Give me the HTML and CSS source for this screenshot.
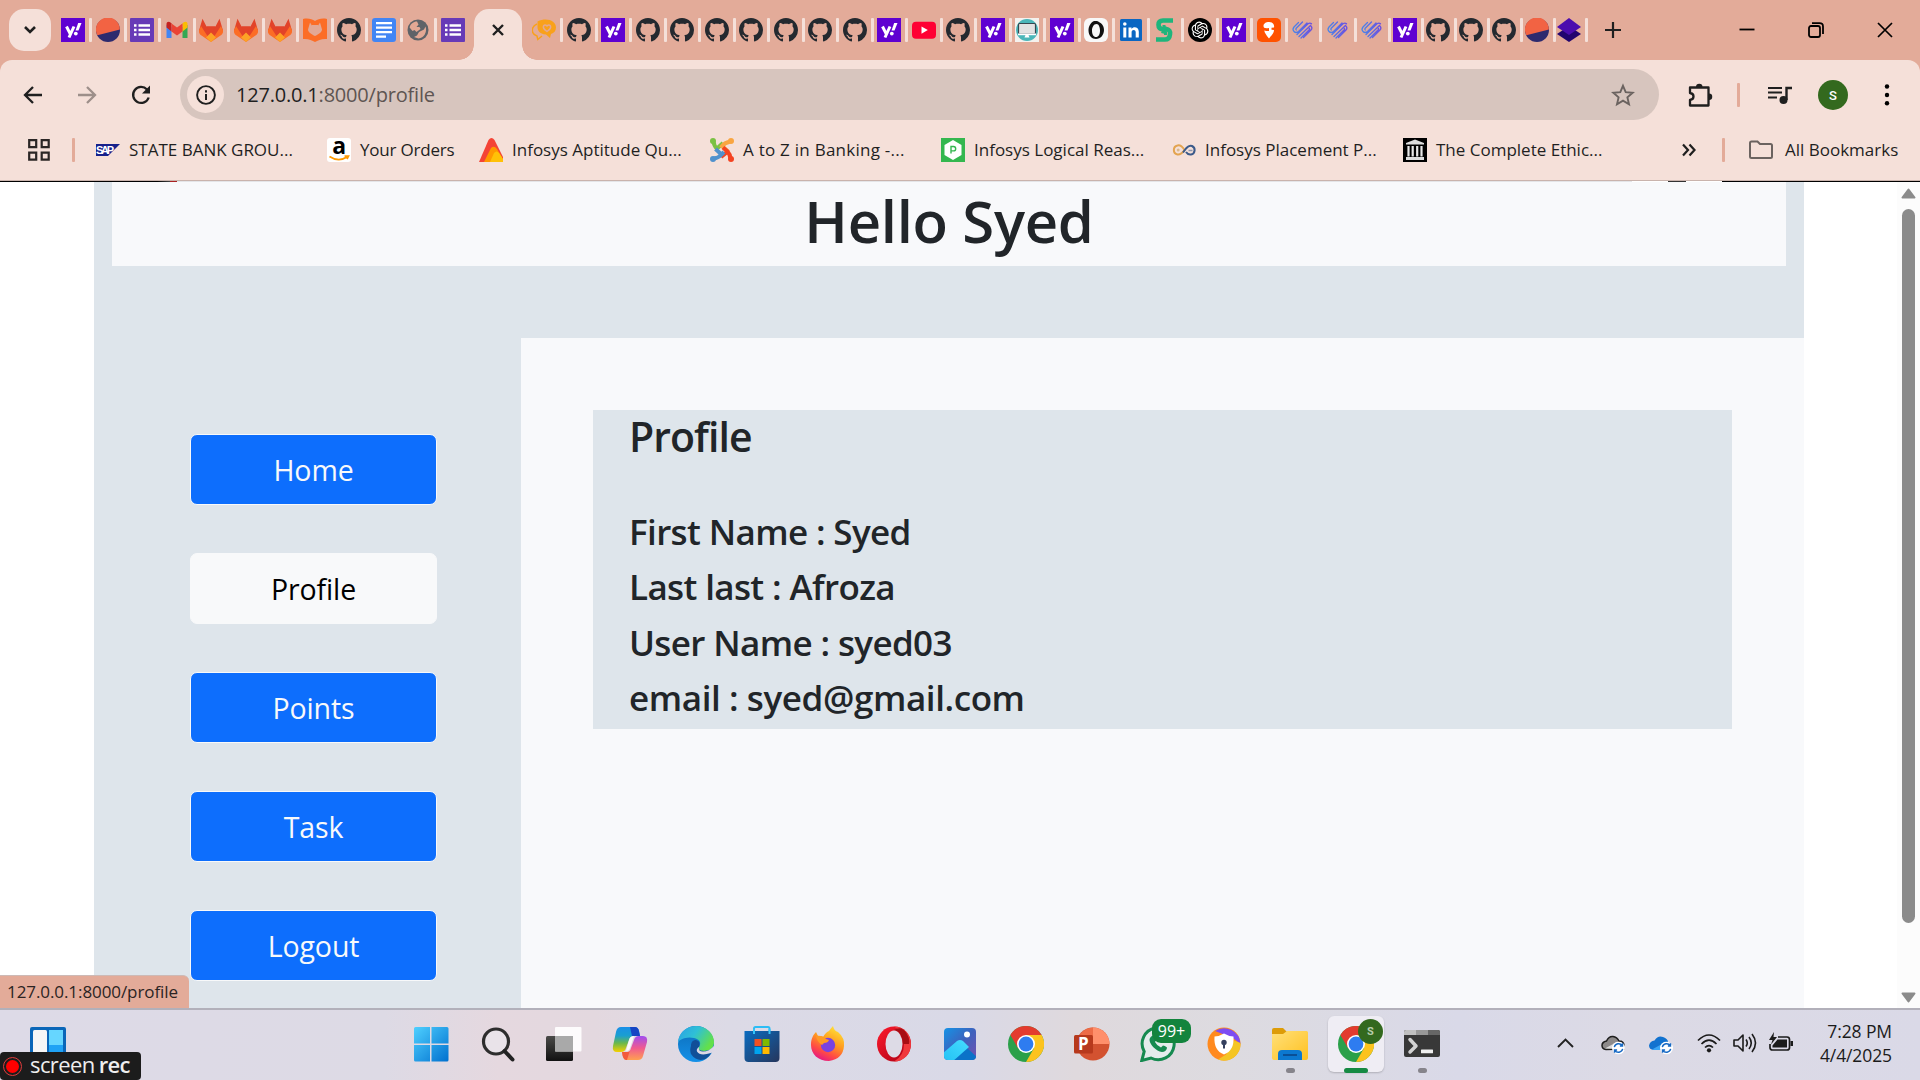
FILE: index.html
```html
<!DOCTYPE html>
<html lang="en">
<head>
<meta charset="utf-8">
<title>Profile</title>
<link rel="stylesheet" href="styles.css">
</head>
<body>
<svg class="sprite" width="0" height="0" aria-hidden="true">
  <defs>
    <linearGradient id="gWin" x1="0" y1="0" x2="1" y2="1"><stop offset="0" stop-color="#4fd0ff"/><stop offset="1" stop-color="#0070cf"/></linearGradient>
    <linearGradient id="gCopA" x1="0" y1="0" x2="0" y2="1"><stop offset="0" stop-color="#1a8fe8"/><stop offset=".35" stop-color="#1a9fd0"/><stop offset=".65" stop-color="#6cb84a"/><stop offset="1" stop-color="#f5d000"/></linearGradient>
    <linearGradient id="gCopB" x1="0" y1="0" x2="0" y2="1"><stop offset="0" stop-color="#a04df0"/><stop offset=".5" stop-color="#f05a90"/><stop offset="1" stop-color="#ffa050"/></linearGradient>
    <linearGradient id="gEdgeA" x1="0" y1="0" x2="1" y2=".5"><stop offset="0" stop-color="#2a9fe6"/><stop offset=".5" stop-color="#2fc0d6"/><stop offset="1" stop-color="#63e04a"/></linearGradient>
    <linearGradient id="gEdgeB" x1="0" y1="0" x2="0" y2="1"><stop offset="0" stop-color="#0c6cb8"/><stop offset="1" stop-color="#1490e8"/></linearGradient>
    <linearGradient id="gStore" x1="0" y1="0" x2="1" y2="1"><stop offset="0" stop-color="#0a6cc0"/><stop offset="1" stop-color="#26365c"/></linearGradient>
    <linearGradient id="gFox" x1=".8" y1="0" x2=".3" y2="1"><stop offset="0" stop-color="#ffe83a"/><stop offset=".45" stop-color="#ff9a1f"/><stop offset=".75" stop-color="#ff4a45"/><stop offset="1" stop-color="#e31587"/></linearGradient>
    <linearGradient id="gPhoto" x1="0" y1="0" x2="1" y2="1"><stop offset="0" stop-color="#1593e6"/><stop offset=".5" stop-color="#3d62bd"/><stop offset="1" stop-color="#7450b0"/></linearGradient>
    <linearGradient id="gPeak" x1="0" y1="1" x2="1" y2="0"><stop offset="0" stop-color="#22c0f4"/><stop offset="1" stop-color="#45dcff"/></linearGradient>
    <linearGradient id="gFold" x1="0" y1="0" x2="1" y2="1"><stop offset="0" stop-color="#ffe07a"/><stop offset="1" stop-color="#ffc120"/></linearGradient>
    <linearGradient id="gTask" x1="0" y1="0" x2="0" y2="1"><stop offset="0" stop-color="#4a4a48"/><stop offset="1" stop-color="#111"/></linearGradient>
    <linearGradient id="gOpera" x1="0" y1="0" x2="1" y2="1"><stop offset="0" stop-color="#ff1b2d"/><stop offset="1" stop-color="#a70014"/></linearGradient>
    <linearGradient id="gHatch" x1="0" y1="0" x2="1" y2="0"><stop offset="0" stop-color="#4a86e8"/><stop offset="1" stop-color="#6b4fe0"/></linearGradient>
  </defs>
  <symbol id="github" viewBox="0 0 16 16"><path fill="#24292f" d="M8 0C3.58 0 0 3.58 0 8c0 3.54 2.29 6.53 5.47 7.59.4.07.55-.17.55-.38 0-.19-.01-.82-.01-1.49-2.01.37-2.53-.49-2.69-.94-.09-.23-.48-.94-.82-1.13-.28-.15-.68-.52-.01-.53.63-.01 1.08.58 1.23.82.72 1.21 1.87.87 2.33.66.07-.52.28-.87.51-1.07-1.78-.2-3.64-.89-3.64-3.95 0-.87.31-1.59.82-2.15-.08-.2-.36-1.02.08-2.12 0 0 .67-.21 2.2.82.64-.18 1.32-.27 2-.27s1.36.09 2 .27c1.53-1.04 2.2-.82 2.2-.82.44 1.1.16 1.92.08 2.12.51.56.82 1.27.82 2.15 0 3.07-1.87 3.75-3.65 3.95.29.25.54.73.54 1.48 0 1.07-.01 1.93-.01 2.2 0 .21.15.46.55.38A8.01 8.01 0 0 0 16 8c0-4.42-3.58-8-8-8z"/></symbol>
  <symbol id="yahoo" viewBox="0 0 24 24"><path fill="#5f01d1" d="M0 0h24v24H0z"/><path d="M5.500 8.500l3.600 7.200M13 8.500l-5 11" stroke="#fff" stroke-width="3"/><path d="M17.200 5h3.300l-3 7.500h-3z" fill="#fff"/><circle cx="14.800" cy="15.600" r="1.900" fill="#fff"/></symbol>
  <symbol id="headspace" viewBox="0 0 24 24"><circle cx="12" cy="12" r="12" fill="#2d2a6e"/><path d="M1.400 17.300A12 12 0 1 1 23.900 11.500z" fill="#f26343"/></symbol>
  <symbol id="forms" viewBox="0 0 24 24"><rect width="24" height="24" rx="1" fill="#673ab7"/><path d="M8.500 7.500H20M8.500 12H20M8.500 16.500H20" stroke="#fff" stroke-width="2.400"/><path d="M4 7.500h2.500M4 12h2.500M4 16.500h2.500" stroke="#fff" stroke-width="2.400"/></symbol>
  <symbol id="gmail" viewBox="0 0 24 24"><path d="M1.500 7v13H6.500V9z" fill="#4285f4"/><path d="M17.500 9v11h5V7z" fill="#34a853"/><path d="M1.500 9V6c0-2.300 2.400-3 4-1.500L6.500 5.500v8L1.500 9.500z" fill="#c5221f"/><path d="M17.500 5.500l1-1c1.600-1.500 4-.8 4 1.500v3.500l-5 4z" fill="#fbbc04"/><path d="M6.500 5.500l5.500 4 5.500-4v8l-5.500 4-5.500-4z" fill="#ea4335"/></symbol>
  <symbol id="gitlab" viewBox="0 0 24 24"><path d="M0 12.500L3.500.8l4 7.700h9l4-7.700L24 12.500 12 22z" fill="#e24329"/><path d="M0 12.500l2-4.500 10 15.500L22 8l2 4.500c.5 2-1 4-2.500 5L12 24l-9.500-6.500C1 16.500-.5 14.500 0 12.500z" fill="#fc6d26"/><path d="M7.500 8.500h9L12 18z" fill="#e24329"/><path d="M12 14.500l5 5-5 4.500-5-4.500z" fill="#fca326"/></symbol>
  <symbol id="book" viewBox="0 0 24 24"><path d="M0 1c5-1 9 0 12 2 3-2 7-3 12-2v20c-5-.5-9 1-12 3-3-2-7-3.500-12-3z" fill="#fc6d26"/><path d="M7 4.500l2.500 4h5l2.500-4 2 7c0 3-4 5-7 6.500C9 16.500 5 14.500 5 11.500z" fill="#e3a894"/><path d="M9 8.500h6" stroke="#e3a894" stroke-width="3"/></symbol>
  <symbol id="docs" viewBox="0 0 24 24"><rect width="24" height="24" rx="3" fill="#4285f4"/><path d="M4 5.200h16M4 9.700h16M4 14.200h16M4 18.700h10" stroke="#fff" stroke-width="2.200"/></symbol>
  <symbol id="globe" viewBox="0 0 24 24"><circle cx="12" cy="12" r="10.500" fill="#5f6368"/><path d="M3.600 9.500C4.300 6 7.500 3.500 11 3.500l1.500 3-2 2.500h3l1 2-4 3-2-2-2 1zM13 14l5-2.500 1.500-3C21.500 14 18 20 12.500 20.500L8 19l3-1.500z" fill="#e3a894"/></symbol>
  <symbol id="chat" viewBox="0 0 24 24"><path d="M5.500 3.500C15-1 24 3 24 9.500c0 3.500-2 5.500-5 6.500l-1 4-4-3.500C7 16 5.500 12 5.500 9z" fill="#f9a11b"/><path d="M5 6C-1.500 9-1 16 5 18l.8 3.500L10 18" fill="none" stroke="#f9a11b" stroke-width="1.500"/><path d="M15 13.500q-4.500-3-3.500-5.500 1.500-2 3.500 0 2-2 3.500 0 1 2.500-3.500 5.500z" fill="none" stroke="#e3a894" stroke-width="1.500"/></symbol>
  <symbol id="youtube" viewBox="0 0 24 24"><rect y="3.700" width="24" height="17" rx="4" fill="#ff0033"/><path d="M9.500 8.500v7.200l6.300-3.600z" fill="#fff"/></symbol>
  <symbol id="monitor" viewBox="0 0 24 24"><path fill="#f4f1ee" d="M0 0h24v24H0z"/><circle cx="12" cy="12" r="11" fill="#4ab6b9"/><rect x="3.500" y="5.500" width="17" height="10.500" rx="1" fill="#e2e2e2" stroke="#37474f" stroke-width="1.200"/><path d="M3 15.500h18v1.700H3z" fill="#fff"/><path d="M10.500 17h3l1 2.500h-5z" fill="#fff"/></symbol>
  <symbol id="drop" viewBox="0 0 24 24"><rect width="24" height="24" rx="6" fill="#f8f8f8"/><path fill-rule="evenodd" d="M10 3C6 5 4.500 9 4.500 12.500 4.500 17.500 8 21 12 21c4.500 0 8-4 8-9 0-4.500-3-8-7-8.500L15 3zM12.500 6c2.500 0 3.500 3.500 3.500 6.500 0 4-1.500 6.500-4 6.500s-4-2.500-4-6.500c0-3 1.500-6.500 4.500-6.500z" fill="#111"/></symbol>
  <symbol id="linkedin" viewBox="0 0 24 24"><rect x="1" y="1" width="22" height="22" rx="1.500" fill="#0a66c2"/><path d="M4.300 9.500h3v10h-3zM9.500 9.500h3v1.400c1.800-2.800 7.300-2.200 7.300 2.800v5.800h-3.100v-5.200c0-3-4.100-2.800-4.100 0v5.200H9.500z" fill="#fff"/><circle cx="5.800" cy="6" r="1.800" fill="#fff"/></symbol>
  <symbol id="scrib" viewBox="0 0 24 24"><path d="M20 2.500H10q-4.500 0-4.500 4.200t4.500 4.500h3.500q4 .3 3.500 5-.5 5.300-5 5.300H3" fill="none" stroke="#1fb57c" stroke-width="4.600"/><path d="M11 7v2l4 2M12.500 17v-2.500l-4-1" fill="none" stroke="#1fb57c" stroke-width="3"/></symbol>
  <symbol id="knot" viewBox="0 0 24 24"><circle cx="12" cy="12" r="12" fill="#000"/><path transform="translate(3.600 3.600) scale(.7)" fill="#fff" d="M22.2819 9.8211a5.9847 5.9847 0 0 0-.5157-4.9108 6.0462 6.0462 0 0 0-6.5098-2.9A6.0651 6.0651 0 0 0 4.9807 4.1818a5.9847 5.9847 0 0 0-3.9977 2.9 6.0462 6.0462 0 0 0 .7427 7.0966 5.98 5.98 0 0 0 .511 4.9107 6.051 6.051 0 0 0 6.5146 2.9001A5.9847 5.9847 0 0 0 13.2599 24a6.0557 6.0557 0 0 0 5.7718-4.2058 5.9894 5.9894 0 0 0 3.9977-2.9001 6.0557 6.0557 0 0 0-.7475-7.0729zm-9.022 12.6081a4.4755 4.4755 0 0 1-2.8764-1.0408l.1419-.0804 4.7783-2.7582a.7948.7948 0 0 0 .3927-.6813v-6.7369l2.02 1.1686a.071.071 0 0 1 .038.052v5.5826a4.504 4.504 0 0 1-4.4945 4.4944zm-9.6607-4.1254a4.4708 4.4708 0 0 1-.5346-3.0137l.142.0852 4.783 2.7582a.7712.7712 0 0 0 .7806 0l5.8428-3.3685v2.3324a.0804.0804 0 0 1-.0332.0615L9.74 19.9502a4.4992 4.4992 0 0 1-6.1408-1.6464zM2.3408 7.8956a4.485 4.485 0 0 1 2.3655-1.9728V11.6a.7664.7664 0 0 0 .3879.6765l5.8144 3.3543-2.0201 1.1685a.0757.0757 0 0 1-.071 0l-4.8303-2.7865A4.504 4.504 0 0 1 2.3408 7.872zm16.5963 3.8558L13.1038 8.364 15.1192 7.2a.0757.0757 0 0 1 .071 0l4.8303 2.7913a4.4944 4.4944 0 0 1-.6765 8.1042v-5.6772a.79.79 0 0 0-.407-.667zm2.0107-3.0231l-.142-.0852-4.7735-2.7818a.7759.7759 0 0 0-.7854 0L9.409 9.2297V6.8974a.0662.0662 0 0 1 .0284-.0615l4.8303-2.7866a4.4992 4.4992 0 0 1 6.6802 4.66zM8.3065 12.863l-2.02-1.1638a.0804.0804 0 0 1-.038-.0567V6.0742a4.4992 4.4992 0 0 1 7.3757-3.4537l-.142.0805L8.704 5.459a.7948.7948 0 0 0-.3927.6813zm1.0976-2.3654l2.602-1.4998 2.6069 1.4998v2.9994l-2.5974 1.4997-2.6067-1.4997Z"/></symbol>
  <symbol id="swiggy" viewBox="0 0 24 24"><rect width="24" height="24" rx="5" fill="#ff5200"/><path d="M12 20.500C8.500 16 7 13.500 7.500 12.500q2 .8 4.500.5V10C8 10.500 6.500 10 6.500 8c0-2.500 2.500-4 5.500-4 3.500 0 5.700 2.500 5 5.500l-2.500.2v2l2.500.3C17 15 14.500 17.500 12 20.500z" fill="#fff"/></symbol>
  <symbol id="hatch" viewBox="0 0 24 24"><g fill="none" stroke="url(#gHatch)" stroke-width="1.300" stroke-linecap="round"><path d="M7.500 4.500L3 9q-2 2.500 0 4.500t4.500 0L16 5M11.500 4L5 10.500q-.5 1 .3 1.500M6 16.500L17 5.800q2-1.500 3.500 0M8 18.500L19.500 7.500q2.500 2.500.5 4.500l-7.500 7.500M10 20l8.500-8.500q.5-1-.5-1.500"/></g></symbol>
  <symbol id="layers" viewBox="0 0 24 24"><path d="M0 16l12-8 12 8-12 8z" fill="#21046e"/><path d="M0 9l12-9 12 9-12 8z" fill="#4b0cae"/></symbol>
  <symbol id="chrome" viewBox="0 0 36 36"><circle cx="18" cy="18" r="18" fill="#2ba04a"/><path d="M2.400 9A18 18 0 0 1 33.600 9H18l-7.800 13.500z" fill="#e33b2e"/><path d="M33.600 9A18 18 0 0 1 18 36l7.800-13.500L18 9z" fill="#fcc31e"/><circle cx="18" cy="18" r="9" fill="#fff"/><circle cx="18" cy="18" r="7.400" fill="#2e7cf0"/></symbol>
  <symbol id="sync" viewBox="0 0 14 14"><circle cx="7" cy="7" r="7" fill="#fff"/><path d="M2.500 6A4.700 4.700 0 0 1 11 4.500M11.500 8A4.700 4.700 0 0 1 3 9.500M11.300 1.800v3H8.500M2.700 12.200v-3h2.800" fill="none" stroke="#1769c4" stroke-width="1.500"/></symbol>
</svg>

<div class="screen">
  <header class="tabstrip">
    <button class="tab-search"><svg width="14" height="10" viewBox="0 0 14 10"><path d="M2 2l5 5 5-5" fill="none" stroke="#1f1f1f" stroke-width="2.600"/></svg></button>
    <div class="tabs tabs-left">
      <span class="tab"><svg><use href="#yahoo"/></svg></span>
      <span class="tab"><svg><use href="#headspace"/></svg></span>
      <span class="tab"><svg><use href="#forms"/></svg></span>
      <span class="tab"><svg><use href="#gmail"/></svg></span>
      <span class="tab"><svg><use href="#gitlab"/></svg></span>
      <span class="tab"><svg><use href="#gitlab"/></svg></span>
      <span class="tab"><svg><use href="#gitlab"/></svg></span>
      <span class="tab"><svg><use href="#book"/></svg></span>
      <span class="tab"><svg><use href="#github"/></svg></span>
      <span class="tab"><svg><use href="#docs"/></svg></span>
      <span class="tab"><svg><use href="#globe"/></svg></span>
      <span class="tab last"><svg><use href="#forms"/></svg></span>
    </div>
    <div class="tab-active"><svg width="14" height="14" viewBox="0 0 14 14"><path d="M2 2l10 10M12 2L2 12" stroke="#1f1f1f" stroke-width="2.400"/></svg></div>
    <div class="tabs tabs-right">
      <span class="tab"><svg><use href="#chat"/></svg></span>
      <span class="tab"><svg><use href="#github"/></svg></span>
      <span class="tab"><svg><use href="#yahoo"/></svg></span>
      <span class="tab"><svg><use href="#github"/></svg></span>
      <span class="tab"><svg><use href="#github"/></svg></span>
      <span class="tab"><svg><use href="#github"/></svg></span>
      <span class="tab"><svg><use href="#github"/></svg></span>
      <span class="tab"><svg><use href="#github"/></svg></span>
      <span class="tab"><svg><use href="#github"/></svg></span>
      <span class="tab"><svg><use href="#github"/></svg></span>
      <span class="tab"><svg><use href="#yahoo"/></svg></span>
      <span class="tab"><svg><use href="#youtube"/></svg></span>
      <span class="tab"><svg><use href="#github"/></svg></span>
      <span class="tab"><svg><use href="#yahoo"/></svg></span>
      <span class="tab"><svg><use href="#monitor"/></svg></span>
      <span class="tab"><svg><use href="#yahoo"/></svg></span>
      <span class="tab"><svg><use href="#drop"/></svg></span>
      <span class="tab"><svg><use href="#linkedin"/></svg></span>
      <span class="tab"><svg><use href="#scrib"/></svg></span>
      <span class="tab"><svg><use href="#knot"/></svg></span>
      <span class="tab"><svg><use href="#yahoo"/></svg></span>
      <span class="tab"><svg><use href="#swiggy"/></svg></span>
      <span class="tab"><svg><use href="#hatch"/></svg></span>
      <span class="tab"><svg><use href="#hatch"/></svg></span>
      <span class="tab narrow"><svg><use href="#hatch"/></svg></span>
      <span class="tab narrow"><svg><use href="#yahoo"/></svg></span>
      <span class="tab narrow"><svg><use href="#github"/></svg></span>
      <span class="tab narrow"><svg><use href="#github"/></svg></span>
      <span class="tab narrow"><svg><use href="#github"/></svg></span>
      <span class="tab narrow"><svg><use href="#headspace"/></svg></span>
      <span class="tab narrow"><svg><use href="#layers"/></svg></span>
    </div>
    <svg class="new-tab" width="16" height="16" viewBox="0 0 16 16"><path d="M8 0v16M0 8h16" stroke="#1f1f1f" stroke-width="2.200"/></svg>
    <div class="window-buttons">
      <svg width="16" height="16" viewBox="0 0 16 16"><path d="M.5 7.500h15" stroke="#000" stroke-width="1.800"/></svg>
      <svg width="16" height="16" viewBox="0 0 16 16"><rect x="1" y="4" width="11" height="11" rx="2" fill="none" stroke="#000" stroke-width="1.800"/><path d="M4 1.200h7.500Q15 1.200 15 4.500V12" fill="none" stroke="#000" stroke-width="1.800"/></svg>
      <svg width="16" height="16" viewBox="0 0 16 16"><path d="M1 1l14 14M15 1L1 15" stroke="#000" stroke-width="1.700"/></svg>
    </div>
  </header>

  <div class="chrome-bars">
    <div class="toolbar">
      <svg class="nav" width="20" height="20" viewBox="0 0 20 20"><path d="M19 10H3M10 2l-8 8 8 8" fill="none" stroke="#1f1f1f" stroke-width="2.300"/></svg>
      <svg class="nav" width="20" height="20" viewBox="0 0 20 20"><path d="M1 10h16M10 2l8 8-8 8" fill="none" stroke="#9d8f8a" stroke-width="2.300"/></svg>
      <svg class="nav" width="20" height="20" viewBox="0 0 20 20"><path d="M17.700 12.500A8 8 0 1 1 16 4.500L18 7" fill="none" stroke="#1f1f1f" stroke-width="2.300"/><path d="M19 .5v8h-8z" fill="#1f1f1f"/></svg>
      <div class="omnibox">
        <span class="site-info"><svg width="20" height="20" viewBox="0 0 20 20"><circle cx="10" cy="10" r="8.900" fill="none" stroke="#1f1f1f" stroke-width="1.900"/><path d="M10 9v6M10 5.200v2.200" stroke="#1f1f1f" stroke-width="2"/></svg></span>
        <span class="url">127.0.0.1<span class="url-path">:8000/profile</span></span>
        <svg class="star" width="24" height="24" viewBox="0 0 24 24"><path d="M12 2.800l2.700 6.400 7 .6-5.300 4.600 1.600 6.800-6-3.600-6 3.600 1.600-6.800L2.300 9.800l7-.6z" fill="none" stroke="#6b6360" stroke-width="1.900"/></svg>
      </div>
      <svg class="ext" width="26" height="26" viewBox="0 0 26 26"><path d="M3 5.500h18.500v18H3v-5.500q3.500-.5 3.500-3.500T3 11z" fill="none" stroke="#1f1f1f" stroke-width="2.300" stroke-linejoin="round"/><path d="M9 5a3 3 0 0 1 6.500 0zM22 11.500a3 3 0 0 1 0 6.500z" fill="#1f1f1f"/></svg>
      <i class="divider"></i>
      <svg class="music" width="24" height="20" viewBox="0 0 24 20"><path d="M0 3h14M0 7.500h14M0 12.500h9" stroke="#1f1f1f" stroke-width="2.200"/><path d="M24 3h-5.500v12" fill="none" stroke="#1f1f1f" stroke-width="2.400"/><circle cx="15.500" cy="15" r="4" fill="#1f1f1f"/></svg>
      <span class="avatar">S</span>
      <svg class="menu" width="6" height="24" viewBox="0 0 6 24"><circle cx="3" cy="3.500" r="2.200"/><circle cx="3" cy="12" r="2.200"/><circle cx="3" cy="20.300" r="2.200"/></svg>
    </div>
    <nav class="bookmarks">
      <svg class="apps" width="22" height="22" viewBox="0 0 22 22"><path d="M1.200 1.200h7v7h-7zM13.700 1.200h7v7h-7zM1.200 13.700h7v7h-7zM13.700 13.700h7v7h-7z" fill="none" stroke="#2b2625" stroke-width="2.200"/></svg>
      <i class="divider"></i>
      <a class="bookmark bm-sap"><svg viewBox="0 0 24 24"><path d="M0 6h24L12 18H0z" fill="#16218c"/><text x="0" y="16" class="sap-word" textLength="18">SAP</text></svg><span>STATE BANK GROU...</span></a>
      <a class="bookmark bm-amazon"><svg viewBox="0 0 24 24"><rect width="24" height="24" rx="3" fill="#fff"/><text x="12" y="16" class="amazon-a">a</text><path d="M2.500 18.500q9 6 17.500.5M17.500 18h4l-1.500 3" fill="none" stroke="#f90" stroke-width="1.700"/></svg><span>Your Orders</span></a>
      <a class="bookmark"><svg viewBox="0 0 24 24"><path d="M0 24L9.500 2q3-4 6 0L24 19v5z" fill="#f44336"/><path d="M5 24l7-14q3-3 6 1l6 10v3z" fill="#ff9800"/><path d="M11 24l4-9q2.500-3 5 0l4 6v3z" fill="#ffc107"/></svg><span>Infosys Aptitude Qu...</span></a>
      <a class="bookmark bm-banking"><svg viewBox="0 0 24 24"><g fill="none" stroke-width="4"><path d="M3.500 3.500Q4 8 7 10.500l6-5.500" stroke="#7ac143"/><path d="M20.500 3.500Q15 4.500 12 8l6.500 6" stroke="#f9a541"/><path d="M20.500 20.500Q20 16 17.500 13.500L13 9.500M11 19l5-4" stroke="#f44321"/><path d="M3.500 20.500q5-.5 7.500-3.500l3-3M5.500 11l5.500 5" stroke="#5091cd"/></g><circle cx="3" cy="3" r="3" fill="#7ac143"/><circle cx="21" cy="3" r="3" fill="#f9a541"/><circle cx="21" cy="21" r="3" fill="#f44321"/><circle cx="3" cy="21" r="3" fill="#5091cd"/></svg><span>A to Z in Banking -...</span></a>
      <a class="bookmark"><svg viewBox="0 0 24 24"><path fill="#34b74f" d="M0 0h24v24H0z"/><path d="M12 2l8.500 5v10L12 22l-8.500-5V7z" fill="#fff"/><path d="M10 15.500v-7H12.500a2.200 2.200 0 0 1 0 4.400H10" fill="none" stroke="#34b74f" stroke-width="1.400"/></svg><span>Infosys Logical Reas...</span></a>
      <a class="bookmark"><svg viewBox="0 0 24 24"><path d="M12.500 12Q9 6.500 5.500 7.500a4.600 4.600 0 0 0 0 9Q9 17 12.500 12" fill="none" stroke="#e3a450" stroke-width="2"/><path d="M11 14.500l3.500-4.500Q17 7 20 8a4.500 4.500 0 0 1-1 8.500q-3 .5-5-2.500" fill="none" stroke="#3b5a8a" stroke-width="2"/><circle cx="6.200" cy="12" r="1.500" fill="#d9b98c"/><path d="M16.500 12.500h4" stroke="#8b97ad" stroke-width="1.500"/></svg><span>Infosys Placement P...</span></a>
      <a class="bookmark"><svg viewBox="0 0 24 24"><path d="M0 0h24v24H0z"/><path d="M3 5l9-3.500L21 5v1.500H3zM3 19h18v3H3z" fill="#ddd"/><path d="M5.500 8v10.500M9.700 8v10.500M14.200 8v10.500M18.500 8v10.500" stroke="#e8e8e8" stroke-width="2.200"/></svg><span>The Complete Ethic...</span></a>
      <svg class="more" width="14" height="14" viewBox="0 0 14 14"><path d="M1 1.500L6 7l-5 5.500M7.500 1.500l5 5.500-5 5.500" fill="none" stroke="#1f1f1f" stroke-width="2.200"/></svg>
      <i class="divider"></i>
      <a class="all-bookmarks"><svg viewBox="0 0 24 24"><path d="M1 5q0-1.500 1.500-1.500h6l2.500 2.500h10.500Q23 6 23 7.500v11Q23 20 21.500 20h-19Q1 20 1 18.500z" fill="none" stroke="#6b6360" stroke-width="2"/></svg><span>All Bookmarks</span></a>
    </nav>
  </div>

  <div class="viewport">
    <div class="gutter"></div>
    <div class="page">
      <h1 class="greeting">Hello Syed</h1>
      <div class="columns">
        <aside class="sidebar">
          <a class="btn">Home</a>
          <a class="btn current">Profile</a>
          <a class="btn">Points</a>
          <a class="btn">Task</a>
          <a class="btn">Logout</a>
        </aside>
        <main class="content">
          <section class="card">
            <h2>Profile</h2>
            <p>First Name : Syed</p>
            <p>Last last : Afroza</p>
            <p>User Name : syed03</p>
            <p class="email">email : syed@gmail.com</p>
          </section>
        </main>
      </div>
    </div>
    <div class="scrollbar">
      <svg width="15" height="11" viewBox="0 0 15 11"><path d="M7.500 1.500L13.500 9.500h-12z" fill="#8b8b8b" stroke="#8b8b8b" stroke-width="2" stroke-linejoin="round"/></svg>
      <i class="thumb"></i>
      <svg width="15" height="11" viewBox="0 0 15 11"><path d="M7.500 9.500L13.500 1.500h-12z" fill="#8b8b8b" stroke="#8b8b8b" stroke-width="2" stroke-linejoin="round"/></svg>
    </div>
    <span class="status">127.0.0.1:8000/profile</span>
  </div>

  <footer class="taskbar">
    <div class="widgets"><svg width="36" height="36" viewBox="0 0 36 36"><rect width="36" height="36" rx="2" fill="#0a66b8"/><rect x="3" y="3" width="14" height="30" rx="1.500" fill="#f6f6f6"/><rect x="19" y="3" width="14" height="15" fill="#66d6ff"/><rect x="19" y="18" width="14" height="15" fill="#1fa2f5"/></svg></div>
    <div class="apps-row">
      <span class="app start"><svg viewBox="0 0 36 36"><path d="M1 2.500Q1 1 2.500 1H17v16.500H1zM18.500 1H34q1.500 0 1.500 1.500v15h-17zM1 19h16v16.500H2.500Q1 35.500 1 34zM18.500 19h17v15q0 1.500-1.500 1.500H18.500z" fill="url(#gWin)"/></svg></span>
      <span class="app"><svg viewBox="0 0 36 36"><circle cx="16" cy="15.500" r="12.500" fill="#e9e3e9" stroke="#2d2d2d" stroke-width="3.200"/><path d="M24.500 25l8 8.500" stroke="#222" stroke-width="4" stroke-linecap="round"/></svg></span>
      <span class="app"><svg viewBox="0 0 36 36"><rect x="0" y="10" width="27" height="25" rx="1.500" fill="url(#gTask)"/><rect x="9" y="1" width="26.500" height="24.500" rx="1" fill="#fff" opacity=".9"/><path d="M9 10h18v15.500H9z" fill="#a9a9a9"/></svg></span>
      <span class="app"><svg viewBox="0 0 36 36"><path d="M9 1h14q3 0 4 4l1 5h-6q-4 0-5 4l-3 8q-1 4-5 4H5q-5 0-4-6L4 6q1-5 5-5z" fill="url(#gCopA)"/><path d="M18 1h5q3 0 4 4l1 5h-8z" fill="#1645c4"/><path d="M10 26h5q3 0 4-4l3-8q1-4 5-4h4q5 0 4 6l-4 14q-1 4-5 4H14q-3 0-4-8z" fill="url(#gCopB)"/><path d="M10 26h5q3 0 3-2l-3 10q-4 1-5-8z" fill="#f25a3c"/><path d="M17 14q1-4 5-4l-4 12q-1 3-4 3z" fill="#fff" opacity=".85"/></svg></span>
      <span class="app"><svg viewBox="0 0 36 36"><circle cx="18" cy="18" r="18" fill="url(#gEdgeB)"/><path d="M0 16C1 6 9 0 18 0c10 0 18 7 18 16 0 6-4 9-10 9-5 0-6-2-5-4 3-5 0-8-5-9C8 10 1 14 0 16z" fill="url(#gEdgeA)"/><path d="M13 20c0-4 2-6 5-6 4 1 4 4 3 7-1 2 0 4 5 4 4 0 6-1 10-3l-3 5c-4 8-14 10-20 1-1-3-1-5 0-8z" fill="#114f98"/><path d="M33 27l3-1v-6q-5 5.500-11 5.500-5 0-4-4.500-3 2-2 4.500 3 5 14 1.500z" fill="#dcd8e5"/></svg></span>
      <span class="app"><svg viewBox="0 0 36 36"><path d="M10 7V2.500Q10 1 11.500 1h12.500q1.500 0 1.500 1.500V7" fill="none" stroke="#2dbdf5" stroke-width="2"/><path d="M.5 5H35.500V32q0 4-4 4h-27q-4 0-4-4z" fill="url(#gStore)"/><path d="M10 3v5M25.500 3v5" stroke="#35c4f8" stroke-width="2"/><path d="M10.500 13h7v7h-7z" fill="#f25022"/><path d="M18.500 13h7v7h-7z" fill="#7fba00"/><path d="M10.500 21h7v7h-7z" fill="#00a4ef"/><path d="M18.500 21h7v7h-7z" fill="#ffb900"/></svg></span>
      <span class="app"><svg viewBox="0 0 36 36"><path d="M1 19C1 13 3 9 6 6l2 4q4 0 5 1 3-5 6-6 2-3 4-5 1 5 5 6 7 6 6 14-1 13-15 15C8 35 1 28 1 19z" fill="url(#gFox)"/><circle cx="18" cy="19" r="7.200" fill="#7a42e0"/><path d="M6 10q7-1 10 3l3 1q-1 3-5 3l-2 2q-5-3-6-9z" fill="#ff9a25"/></svg></span>
      <span class="app"><svg viewBox="0 0 36 36"><ellipse cx="18" cy="18" rx="17" ry="17.500" fill="url(#gOpera)"/><path d="M18 .5C28 .5 35 8 35 18s-7 17.500-17 17.500Q28 30 28 18T18 .5z" fill="#f0383c"/><path d="M18 4q8-5 13 4 3 5 2 10h-6Q26 6 18 4z" fill="#a80d14"/><ellipse cx="18" cy="18" rx="8.500" ry="13.500" fill="#dddbe6"/></svg></span>
      <span class="app"><svg viewBox="0 0 36 36"><clipPath id="cPhoto"><rect x="2" y="2" width="32" height="32" rx="4"/></clipPath><g clip-path="url(#cPhoto)"><path d="M2 2h32v32H2z" fill="url(#gPhoto)"/><path d="M10 36l11-14q2-2 4 0l11 10v4z" fill="#0b72c8"/><path d="M0 28l15-13q3-2 6 0l6 6L10 36H0z" fill="url(#gPeak)"/></g><circle cx="25" cy="8.500" r="3" fill="#fff"/></svg></span>
      <span class="app"><svg viewBox="0 0 36 36"><use href="#chrome"/></svg></span>
      <span class="app"><svg viewBox="0 0 36 36"><circle cx="19" cy="18" r="16.500" fill="#d35230"/><path d="M19 1.500A16.500 16.500 0 0 1 35.500 18H19z" fill="#ff8f6b"/><path d="M19 1.500V18H3A16.500 16.500 0 0 1 19 1.500z" fill="#ed6c47"/><rect x="0" y="9" width="19" height="18.500" rx="1.500" fill="#b7391c"/><text x="9.300" y="24" class="ppt-p">P</text></svg></span>
      <span class="app"><svg viewBox="0 0 36 36"><path d="M1.800 34.500l2.400-9A16 16 0 1 1 11 32z" fill="#e4ecec" stroke="#168a50" stroke-width="3"/><path d="M12 10q2-2 3 0l1.500 3q0 1-1.500 3 2 4 6 5.500l2-2q4 1 4 2.500-1 4-5 4c-6-1-12-7-12.500-12 0-2 1-3 2.500-4z" fill="#168a50"/></svg><span class="count">99+</span></span>
      <span class="app"><svg viewBox="0 0 36 36"><circle cx="18" cy="18" r="16.500" fill="#ff8a1e"/><path d="M9 5A16.500 16.500 0 0 1 34.500 18L27 12z" fill="#7d4cf2"/><path d="M34.500 17A16.500 16.500 0 0 1 12 33.500l8-5 8-14z" fill="#f4c524"/><path d="M18 7.500q5 3 9.500 3 1 14-9.500 18-10.500-4-9.500-18 4.500 0 9.500-3z" fill="#fff"/><circle cx="18" cy="16.500" r="2.700" fill="#34405e"/><path d="M17 17h2v5.500h-2z" fill="#34405e"/></svg></span>
      <span class="app running"><svg viewBox="0 0 36 36"><path d="M0 4q0-2 2-2h9l4 4-4 4H0z" fill="#dd9c08"/><path d="M0 8h11l4-3h19.500Q36 5 36 6.500V32q0 2-2 2H2q-2 0-2-2z" fill="url(#gFold)"/><path d="M6 34v-6q0-4 4-4h16q4 0 4 4v6z" fill="#0c78d0"/><path d="M11 29h14" stroke="#0a4f96" stroke-width="2"/></svg></span>
      <span class="app active"><svg viewBox="0 0 36 36"><use href="#chrome"/></svg><span class="profile-dot">S</span></span>
      <span class="app running"><svg viewBox="0 0 36 36"><rect y="4" width="36" height="27" rx="2" fill="#383838"/><path d="M2 4h10v5H0V6q0-2 2-2z" fill="#c0c0c0"/><path d="M12 4h12v5H12z" fill="#989898"/><path d="M24 4h10q2 0 2 2v3H24z" fill="#666"/><path d="M6 13.500l6 6.500-6 6" fill="none" stroke="#d2d2d2" stroke-width="3.500" stroke-linecap="round" stroke-linejoin="round"/><rect x="17" y="23.500" width="12" height="3.800" rx=".5" fill="#efefef"/></svg></span>
    </div>
    <div class="tray">
      <svg class="caret" width="17" height="10" viewBox="0 0 17 10"><path d="M1 9l7.500-7.500L16 9" fill="none" stroke="#222" stroke-width="1.900"/></svg>
      <svg class="cloud-a" width="24" height="24" viewBox="0 0 24 24"><path d="M5 18.500Q1 18 1 14.500T5.500 10Q8 5 12 5.500t6 4.500q5 0 5 5v3z" fill="#8d8a8a" stroke="#1e1e1e" stroke-width="1.500"/><path d="M4 17.500l9-5 8 3v2.500z" fill="#ddd"/><use href="#sync" x="11" y="10.500" width="13" height="13"/></svg>
      <svg class="cloud-b" width="24" height="24" viewBox="0 0 24 24"><path d="M5 19Q0 18.500 0 14.500 1 10 5.500 9.500 9 4 14 6t5 5q4 1 4 4v4z" fill="#1272cf"/><path d="M3 18.500l9-5 8 3v2.500H5z" fill="#3aa5f5"/><use href="#sync" x="11" y="10.500" width="13" height="13"/></svg>
      <svg class="wifi" width="24" height="20" viewBox="0 0 24 20"><path d="M1 7.500Q12-3.500 23 7.500M4.500 11q7.500-7.500 15 0M8 14.500q4-4 8 0" fill="none" stroke="#1b1b1b" stroke-width="1.700"/><circle cx="12" cy="17.300" r="2.100" fill="#1b1b1b"/></svg>
      <svg class="volume" width="24" height="22" viewBox="0 0 24 22"><path d="M1 8h4l5-5v16l-5-5H1zM13 7.500q2.500 3.500 0 7M16 5q4.500 6 0 12M19 2q7 9 0 18" fill="none" stroke="#1b1b1b" stroke-width="1.600" stroke-linejoin="round"/></svg>
      <svg class="battery" width="24" height="22" viewBox="0 0 24 22"><path d="M9 5h9q2.500 0 2.500 2.500v8Q20.500 18 18 18H3.500Q1 18 1 15.500V12" fill="none" stroke="#1b1b1b" stroke-width="1.700"/><path d="M8.500 7.500H18V15.500H3.500v-2zM21.500 9H24v5h-2.500zM5 0L0 8h3.500L2 12.500 8 5H4.500z" fill="#1b1b1b"/></svg>
      <div class="clock"><span>7:28 PM</span><span>4/4/2025</span></div>
    </div>
    <div class="recorder"><i class="rec-dot"></i><span class="rec-name">screen<b>rec</b></span></div>
  </footer>
</div>
</body>
</html>
```

FILE: styles.css
```css
* { box-sizing: border-box; }

body {
  margin: 0;
  font-family: "Open Sans", "Noto Sans", sans-serif;
  color: #212529;
}

.sprite { position: absolute; }
svg { display: block; flex: none; }

.screen {
  width: 1920px;
  height: 1080px;
  display: flex;
  flex-direction: column;
  overflow: hidden;
  background: #e3ab99;
}

/* Tab strip */
.tabstrip {
  height: 60px;
  display: flex;
  align-items: center;
  flex: none;
}
.tab-search {
  width: 42px;
  height: 42px;
  margin: 0 10px 0 9px;
  padding: 0;
  border: 0;
  border-radius: 15px;
  background: #f5e0d9;
  display: flex;
  align-items: center;
  justify-content: center;
}
.tabs { display: flex; }
.tabs-left { width: 413px; }
.tab {
  width: 34.53px;
  height: 24px;
  flex: none;
  display: flex;
  gap: 4px;
}
.tab svg { width: 24px; height: 24px; }
.tab::after {
  content: "";
  width: 3px;
  height: 24px;
  border-radius: 1px;
  background: #f5e0d9;
}
.tab.last::after { display: none; }
.tab.narrow { width: 32.85px; }
.tab-active {
  width: 48px;
  height: 51px;
  align-self: flex-end;
  border-radius: 15px 15px 0 0;
  background: #f5e0d9;
  display: flex;
  align-items: center;
  justify-content: center;
  padding-bottom: 9px;
  position: relative;
}
.tab-active::before,
.tab-active::after {
  content: "";
  position: absolute;
  bottom: 0;
  width: 15px;
  height: 15px;
}
.tab-active::before { right: 100%; background: radial-gradient(circle at 0 0, transparent 14.5px, #f5e0d9 15px); }
.tab-active::after { left: 100%; background: radial-gradient(circle at 100% 0, transparent 14.5px, #f5e0d9 15px); }
.tabs-right { margin-left: 10px; width: 1073px; }
.window-buttons { display: flex; gap: 53px; margin-left: 118px; }

/* Toolbar and bookmarks */
.chrome-bars {
  height: 121px;
  flex: none;
  background: #f5e0d9;
  border-radius: 12px 12px 0 0;
  border-bottom: 1px solid #c9b3ac;
}
.toolbar {
  height: 69px;
  display: flex;
  align-items: center;
  padding-left: 23px;
}
.nav { margin-right: 34px; }
.nav:nth-child(3) { margin-right: 29px; }
.omnibox {
  width: 1479px;
  height: 51px;
  border-radius: 26px;
  background: #d7c5be;
  display: flex;
  align-items: center;
  padding: 0 24px 0 7px;
}
.site-info {
  width: 37px;
  height: 37px;
  border-radius: 50%;
  background: #f5e0d9;
  display: flex;
  align-items: center;
  justify-content: center;
}
.url { margin-left: 12px; font-size: 20px; letter-spacing: -0.2px; color: #1f1f1f; }
.url-path { color: #5e5552; }
.star { margin-left: auto; }
.ext { margin-left: 28px; }
.divider {
  width: 3px;
  height: 24px;
  border-radius: 1px;
  background: #e3ab99;
  flex: none;
}
.toolbar .divider { margin: 0 28px 0 24px; }
.avatar {
  width: 30px;
  height: 30px;
  margin: 0 36px 0 26px;
  border-radius: 50%;
  background: #33691e;
  color: #fff;
  font: 500 13px/31px Roboto, sans-serif;
  text-align: center;
}
.bookmarks {
  height: 42px;
  display: flex;
  align-items: center;
  padding-left: 28px;
}
.bookmarks .divider { margin: 0 21px 0 22px; }
.bookmark {
  width: 231px;
  display: flex;
  align-items: center;
  gap: 9px;
  flex: none;
  font-size: 17px;
  letter-spacing: 0;
  color: #1f1f1f;
  white-space: nowrap;
}
.bookmark span, .all-bookmarks span { padding-bottom: 2px; }
.bookmark svg, .all-bookmarks svg { width: 24px; height: 24px; overflow: visible; }
.bm-amazon { width: 152px; letter-spacing: -0.2px; }
.bm-banking { letter-spacing: 0.25px; }
.sap-word { font: bold 11px "Liberation Sans", sans-serif; fill: #fff; }
.amazon-a { font: bold 23px "Open Sans", sans-serif; text-anchor: middle; }
.more { margin-left: 48px; }
.bookmarks .more + .divider { margin: 0 24px 0 26px; }
.all-bookmarks { display: flex; align-items: center; gap: 12px; font-size: 17px; color: #1f1f1f; }

/* Web page */
.viewport {
  height: 827px;
  flex: none;
  display: flex;
  position: relative;
  background: #fff;
}
.viewport::before {
  content: "";
  position: absolute;
  inset: 0 0 auto;
  height: 1px;
  background: linear-gradient(90deg, #000 0 157px, #444 170px, #a22 170px 177px, #e4e5e8 177px 1632px, #fff 1632px 1668px, #333 1668px 1686px, #fff 1686px 1722px, #000 1722px);
}
.gutter { width: 94px; flex: none; }
.page {
  width: 1710px;
  background: #dee5eb;
  display: flex;
  flex-direction: column;
}
.greeting {
  height: 85px;
  margin: 0 18px 72px;
  background: #f8f9fb;
  font-size: 58px;
  font-weight: 600;
  line-height: 80px;
  letter-spacing: -0.3px;
  text-align: center;
}
.columns { flex: 1; display: flex; }
.sidebar {
  width: 427px;
  padding: 96px 84px 0 96px;
  display: flex;
  flex-direction: column;
  gap: 48px;
}
.btn {
  height: 71px;
  flex: none;
  border: 1px solid #f8f9fa;
  border-radius: 7px;
  background: #0d6efd;
  color: #f8f9fa;
  font-size: 28.5px;
  line-height: 70px;
  letter-spacing: -0.1px;
  text-align: center;
}
.btn.current { background: #f8f9fa; color: #000; }
.content { flex: 1; background: #f8f9fb; padding: 72px 72px 0; }
.card {
  height: 319px;
  background: #dee5eb;
  padding-left: 36px;
  display: flow-root;
}
.card h2 {
  margin: 0 0 42px;
  font-size: 41px;
  font-weight: 600;
  line-height: 52px;
  letter-spacing: -0.95px;
}
.card p {
  margin: 0;
  font-size: 35px;
  font-weight: 600;
  line-height: 55.3px;
  letter-spacing: -0.63px;
}
.card .email { letter-spacing: -0.41px; }
.scrollbar {
  margin-left: auto;
  width: 23px;
  background: #fcfcfc;
  padding: 7px 0 5px;
  display: flex;
  flex-direction: column;
  align-items: center;
}
.thumb { width: 13px; height: 714px; margin: 10px 0 auto; border-radius: 7px; background: #8b8b8b; }
.status {
  position: absolute;
  left: 0;
  bottom: 0;
  width: 189px;
  height: 33px;
  padding-left: 7px;
  border-top-right-radius: 6px;
  border-top: 1px solid #cdbab6;
  background: #e3ab99;
  font-size: 17px;
  line-height: 32px;
  letter-spacing: -0.08px;
  color: #2b2423;
}

/* Taskbar */
.taskbar {
  height: 72px;
  flex: none;
  display: flex;
  position: relative;
  border-top: 2px solid #b2b0ba;
  background: linear-gradient(90deg, #dddae7 0, #dddae5 20%, #e5d8df 26%, #e3d8df 31%, #dcdae6 38%, #d9d9e7 50%, #dfd9dd 56%, #dddbe0 64%, #d9d9e8 76%, #dcdae5 85%, #dad9e7 100%);
}
.widgets { width: 399px; padding: 17px 0 0 30px; flex: none; }
.apps-row { display: flex; }
.app {
  width: 66px;
  height: 70px;
  position: relative;
  display: flex;
  justify-content: center;
  padding-top: 16px;
}
.app svg { width: 36px; height: 36px; position: relative; }
.app.start { padding-right: 3px; }
.running::after,
.active::after {
  content: "";
  position: absolute;
  left: 28.5px;
  bottom: 7px;
  width: 9px;
  height: 5px;
  border-radius: 3px;
  background: #86848b;
}
.active::before {
  content: "";
  position: absolute;
  left: 5px;
  top: 6px;
  width: 56px;
  height: 56px;
  border-radius: 6px;
  background: #efedf4;
  box-shadow: 0 1px 2px #0003;
}
.active::after { left: 21px; width: 24px; background: #168a43; }
.count {
  position: absolute;
  left: 27px;
  top: 9px;
  width: 39px;
  height: 24px;
  border-radius: 9px;
  background: #13843d;
  color: #fff;
  font-size: 16px;
  line-height: 24px;
  text-align: center;
}
.profile-dot {
  position: absolute;
  left: 35px;
  top: 9px;
  width: 25px;
  height: 25px;
  border-radius: 50%;
  background: #33691e;
  color: #b7cdac;
  font: bold 11px/25px Roboto, sans-serif;
  text-align: center;
}
.ppt-p { font: bold 17px "Open Sans", sans-serif; fill: #fff; text-anchor: middle; }
.tray { flex: 1; display: flex; align-items: center; padding: 0 28px 4px 102px; }
.cloud-a { margin-left: 27px; }
.cloud-b { margin-left: 24px; }
.wifi { margin-left: 24px; }
.volume, .battery { margin-left: 12px; }
.clock {
  margin-left: auto;
  display: flex;
  flex-direction: column;
  align-items: flex-end;
  font-size: 17.5px;
  line-height: 24px;
  letter-spacing: -0.1px;
  color: #1b1b1b;
}
.recorder {
  position: absolute;
  left: 0;
  bottom: 0;
  width: 141px;
  height: 28px;
  border-radius: 4px;
  background: #1c1c1c;
  display: flex;
  align-items: center;
  gap: 9px;
  padding-left: 4px;
}
.rec-dot { width: 17px; height: 17px; border: 2px solid #1c1c1c; border-radius: 50%; background: #f00; outline: 1px solid #e23b3b; flex: none; }
.rec-name { font-size: 22px; line-height: 26px; letter-spacing: -0.6px; color: #eee; padding-bottom: 5px; }
.rec-name b { font-weight: 600; margin-left: 4px; }
```
